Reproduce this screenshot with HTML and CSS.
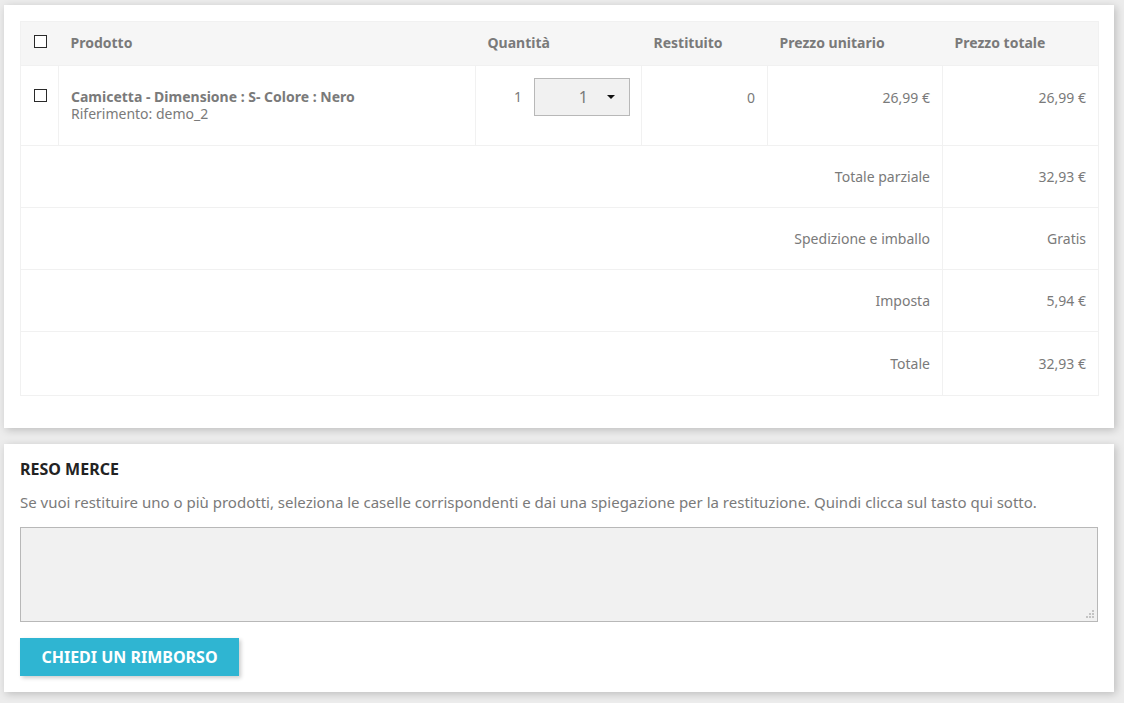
FILE: index.html
```html
<!DOCTYPE html>
<html lang="it">
<head>
<meta charset="utf-8">
<title>Reso merce</title>
<link rel="stylesheet" href="styles.css">
</head>
<body>
<section class="card card-order">
  <table class="order-table">
    <colgroup>
      <col class="c-check"><col class="c-prod"><col class="c-qty"><col class="c-ret"><col class="c-unit"><col class="c-tot">
    </colgroup>
    <thead>
      <tr>
        <th class="cb-cell"><span class="cb"></span></th>
        <th>Prodotto</th>
        <th>Quantità</th>
        <th>Restituito</th>
        <th>Prezzo unitario</th>
        <th>Prezzo totale</th>
      </tr>
    </thead>
    <tbody>
      <tr class="prod-row">
        <td class="cb-cell"><span class="cb cb-row"></span></td>
        <td class="prod">
          <div class="prod-name">Camicetta - Dimensione : S- Colore : Nero</div>
          <div class="prod-ref">Riferimento: demo_2</div>
        </td>
        <td class="qty">
          <div class="qty-wrap">
            <span class="qty-val">1</span>
            <div class="select"><span class="select-val">1</span><span class="caret"></span></div>
          </div>
        </td>
        <td class="num top">0</td>
        <td class="num top">26,99 €</td>
        <td class="num top">26,99 €</td>
      </tr>
      <tr class="sum-row">
        <td colspan="5" class="sum-label">Totale parziale</td>
        <td class="num">32,93 €</td>
      </tr>
      <tr class="sum-row">
        <td colspan="5" class="sum-label">Spedizione e imballo</td>
        <td class="num">Gratis</td>
      </tr>
      <tr class="sum-row">
        <td colspan="5" class="sum-label">Imposta</td>
        <td class="num">5,94 €</td>
      </tr>
      <tr class="sum-row last">
        <td colspan="5" class="sum-label">Totale</td>
        <td class="num">32,93 €</td>
      </tr>
    </tbody>
  </table>
</section>
<section class="card card-return">
  <h3 class="title">RESO MERCE</h3>
  <p class="desc">Se vuoi restituire uno o più prodotti, seleziona le caselle corrispondenti e dai una spiegazione per la restituzione. Quindi clicca sul tasto qui sotto.</p>
  <div class="reason-wrap">
    <textarea class="reason"></textarea>
    <span class="grip"></span>
  </div>
  <button class="btn" type="button">CHIEDI UN RIMBORSO</button>
</section>
</body>
</html>
```

FILE: styles.css
```css
* { box-sizing: border-box; }
html, body { margin: 0; }
body {
  background: #ececec;
  padding: 5px 10px 0 4px;
  font-family: "Noto Sans", "Open Sans", sans-serif;
  font-size: 14px;
  color: #7a7a7a;
  height: 703px;
  overflow: hidden;
}
.card {
  background: #fff;
  box-shadow: 2px 2px 8px 0 rgba(0,0,0,0.2);
  padding: 16px;
}
.card-order { padding-bottom: 32px; }
.card-return { margin-top: 16px; padding-bottom: 16px; }

.order-table {
  width: 100%;
  border-collapse: collapse;
  table-layout: fixed;
  border: 1px solid #f1f1f1;
}
.c-check { width: 38px; }
.c-prod { width: 417px; }
.c-qty { width: 166px; }
.c-ret { width: 126px; }
.c-unit { width: 175px; }
.c-tot { width: 156px; }

.order-table th {
  background: #f6f6f6;
  text-align: left;
  font-weight: 700;
  color: #7a7a7a;
  height: 44px;
  padding: 0 12px 3px;
  line-height: 21px;
  vertical-align: middle;
}
.order-table td {
  border: 1px solid #f1f1f1;
  padding: 0 12px;
  line-height: 21px;
}
.order-table th.cb-cell,
.order-table td.cb-cell { padding: 0 0 0 13px; }
.order-table th.cb-cell { padding-bottom: 4px; }

.cb {
  display: block;
  width: 13px;
  height: 13px;
  border: 1px solid #2a2a2a;
  background: #fff;
}

.prod-row td { height: 80px; vertical-align: top; }
.prod-row td.cb-cell { padding-top: 23px; }
.prod-row td.prod { padding-top: 22px; }
.prod-name { font-weight: 700; line-height: 17px; }
.prod-ref { line-height: 17px; }
.prod-row td.top { padding-top: 21px; }
.prod-row td.qty { padding-top: 12px; padding-right: 11px; }

.qty-wrap {
  display: flex;
  justify-content: flex-end;
  align-items: center;
  gap: 12px;
}
.qty-val { line-height: 38px; }
.select {
  width: 96px;
  height: 38px;
  background: #f1f1f1;
  border: 1px solid #b8b8b8;
  display: flex;
  align-items: center;
  justify-content: flex-end;
  padding-right: 14px;
  color: #7a7a7a;
  font-size: 16px;
}
.select-val { margin-right: 19px; }
.caret {
  width: 0;
  height: 0;
  border-left: 4px solid transparent;
  border-right: 4px solid transparent;
  border-top: 4px solid #111;
}

.num { text-align: right; }
.sum-row td { height: 62px; vertical-align: middle; }
.sum-row.last td { height: 64px; }
.sum-label { text-align: right; }

.title {
  margin: 0;
  color: #232323;
  font-size: 16px;
  font-weight: 700;
  line-height: 19px;
}
.desc {
  margin: 12px 0 0;
  font-size: 15px;
  line-height: 22px;
}
.reason-wrap {
  position: relative;
  margin-top: 14px;
}
.reason {
  display: block;
  width: 100%;
  height: 95px;
  background: #f1f1f1;
  border: 1px solid #b8b8b8;
  resize: none;
  font-family: inherit;
}
.grip {
  position: absolute;
  right: 4px;
  bottom: 4px;
  width: 8px;
  height: 8px;
  background:
    linear-gradient(#c4c4c4, #c4c4c4) 6px 0 / 2px 2px no-repeat,
    linear-gradient(#c4c4c4, #c4c4c4) 3px 3px / 2px 2px no-repeat,
    linear-gradient(#c4c4c4, #c4c4c4) 6px 3px / 2px 2px no-repeat,
    linear-gradient(#c4c4c4, #c4c4c4) 0 6px / 2px 2px no-repeat,
    linear-gradient(#c4c4c4, #c4c4c4) 3px 6px / 2px 2px no-repeat,
    linear-gradient(#c4c4c4, #c4c4c4) 6px 6px / 2px 2px no-repeat;
}
.btn {
  display: block;
  margin-top: 16px;
  width: 219px;
  height: 38px;
  background: #2fb5d2;
  color: #fff;
  border: 0;
  font-family: "Noto Sans", "Open Sans", sans-serif;
  font-size: 16px;
  font-weight: 700;
  padding: 0;
  box-shadow: 2px 2px 4px 0 rgba(0,0,0,0.2);
}
```
